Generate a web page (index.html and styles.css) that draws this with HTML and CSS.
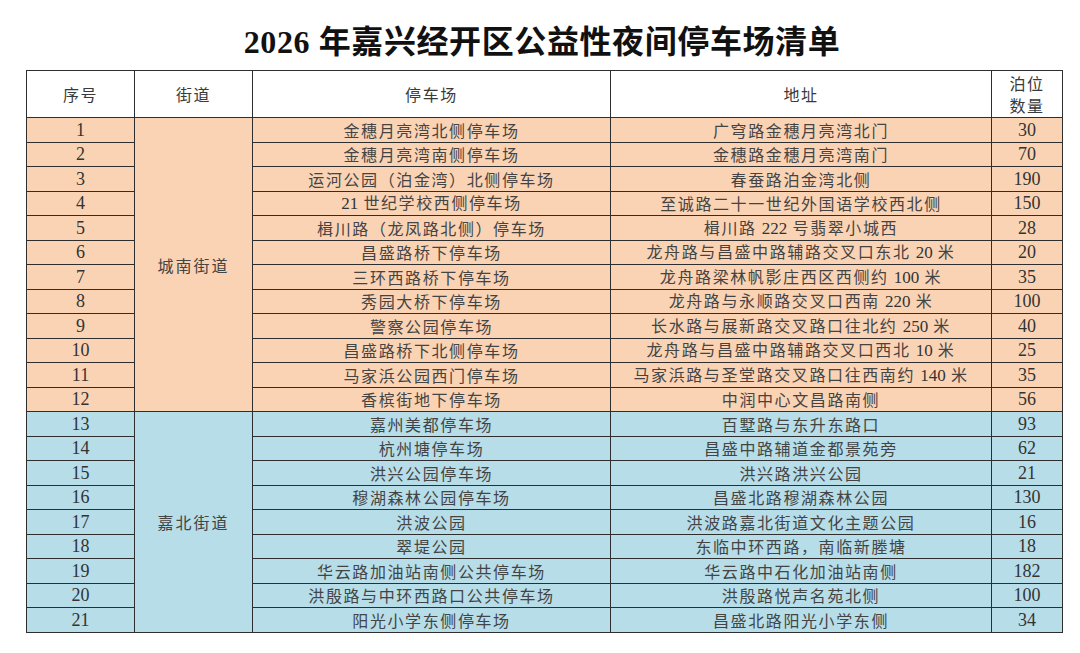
FILE: index.html
```html
<!DOCTYPE html>
<html lang="zh">
<head>
<meta charset="utf-8">
<title>2026年嘉兴经开区公益性夜间停车场清单</title>
<link rel="stylesheet" href="styles.css">
</head>
<body>
<h1 class="title">2026 年嘉兴经开区公益性夜间停车场清单</h1>
<table class="list">
  <colgroup>
    <col class="c-no"><col class="c-street"><col class="c-lot"><col class="c-addr"><col class="c-num">
  </colgroup>
  <thead>
    <tr><th>序号</th><th>街道</th><th>停车场</th><th>地址</th><th>泊位<br>数量</th></tr>
  </thead>
  <tbody class="south">
    <tr><td class="n">1</td><td class="street" rowspan="12">城南街道</td><td>金穗月亮湾北侧停车场</td><td>广穹路金穗月亮湾北门</td><td class="n">30</td></tr>
    <tr><td class="n">2</td><td>金穗月亮湾南侧停车场</td><td>金穗路金穗月亮湾南门</td><td class="n">70</td></tr>
    <tr><td class="n">3</td><td>运河公园（泊金湾）北侧停车场</td><td>春蚕路泊金湾北侧</td><td class="n">190</td></tr>
    <tr><td class="n">4</td><td><span class="num">21</span> 世纪学校西侧停车场</td><td>至诚路二十一世纪外国语学校西北侧</td><td class="n">150</td></tr>
    <tr><td class="n">5</td><td>楫川路（龙凤路北侧）停车场</td><td>楫川路 <span class="num">222</span> 号翡翠小城西</td><td class="n">28</td></tr>
    <tr><td class="n">6</td><td>昌盛路桥下停车场</td><td>龙舟路与昌盛中路辅路交叉口东北 <span class="num">20</span> 米</td><td class="n">20</td></tr>
    <tr><td class="n">7</td><td>三环西路桥下停车场</td><td>龙舟路梁林帆影庄西区西侧约 <span class="num">100</span> 米</td><td class="n">35</td></tr>
    <tr><td class="n">8</td><td>秀园大桥下停车场</td><td>龙舟路与永顺路交叉口西南 <span class="num">220</span> 米</td><td class="n">100</td></tr>
    <tr><td class="n">9</td><td>警察公园停车场</td><td>长水路与展新路交叉路口往北约 <span class="num">250</span> 米</td><td class="n">40</td></tr>
    <tr><td class="n">10</td><td>昌盛路桥下北侧停车场</td><td>龙舟路与昌盛中路辅路交叉口西北 <span class="num">10</span> 米</td><td class="n">25</td></tr>
    <tr><td class="n">11</td><td>马家浜公园西门停车场</td><td>马家浜路与圣堂路交叉路口往西南约 <span class="num">140</span> 米</td><td class="n">35</td></tr>
    <tr><td class="n">12</td><td>香槟街地下停车场</td><td>中润中心文昌路南侧</td><td class="n">56</td></tr>
  </tbody>
  <tbody class="north">
    <tr><td class="n">13</td><td class="street" rowspan="9">嘉北街道</td><td>嘉州美都停车场</td><td>百墅路与东升东路口</td><td class="n">93</td></tr>
    <tr><td class="n">14</td><td>杭州塘停车场</td><td>昌盛中路辅道金都景苑旁</td><td class="n">62</td></tr>
    <tr><td class="n">15</td><td>洪兴公园停车场</td><td>洪兴路洪兴公园</td><td class="n">21</td></tr>
    <tr><td class="n">16</td><td>穆湖森林公园停车场</td><td>昌盛北路穆湖森林公园</td><td class="n">130</td></tr>
    <tr><td class="n">17</td><td>洪波公园</td><td>洪波路嘉北街道文化主题公园</td><td class="n">16</td></tr>
    <tr><td class="n">18</td><td>翠堤公园</td><td>东临中环西路，南临新塍塘</td><td class="n">18</td></tr>
    <tr><td class="n">19</td><td>华云路加油站南侧公共停车场</td><td>华云路中石化加油站南侧</td><td class="n">182</td></tr>
    <tr><td class="n">20</td><td>洪殷路与中环西路口公共停车场</td><td>洪殷路悦声名苑北侧</td><td class="n">100</td></tr>
    <tr><td class="n">21</td><td>阳光小学东侧停车场</td><td>昌盛北路阳光小学东侧</td><td class="n">34</td></tr>
  </tbody>
</table>
</body>
</html>
```
FILE: styles.css
```css
html, body {
  margin: 0;
  padding: 0;
  background: #ffffff;
}
body {
  width: 1080px;
  height: 653px;
  overflow: hidden;
  font-family: "Noto Sans CJK SC", sans-serif;
  color: #444444;
}
.title {
  margin: 0;
  height: 70px;
  line-height: 84px;
  text-align: center;
  font-family: "Liberation Serif", "Noto Sans CJK SC", serif;
  font-weight: 700;
  font-size: 32px;
  color: #111;
  letter-spacing: 0.6px;
  padding-left: 4px;
}
.list {
  margin-left: 26px;
  width: 1036px;
  table-layout: fixed;
  border-collapse: collapse;
  border: 1.5px solid #333;
}
.c-no { width: 108px; }
.c-street { width: 118px; }
.c-lot { width: 358px; }
.c-addr { width: 381px; }
.c-num { width: 71px; }
.list th, .list td {
  border: 1px solid #2e2e2e;
  padding: 0;
  text-align: center;
  vertical-align: middle;
  font-weight: 400;
  font-size: 16px;
  letter-spacing: 1.6px;
  white-space: nowrap;
  overflow: hidden;
}
.list th {
  height: 46px;
  line-height: 22px;
  background: #ffffff;
  color: #3a3a3a;
}
.list td {
  height: 23.5px;
  line-height: 20px;
}
.list td.n, .num {
  font-family: "Liberation Serif", serif;
  font-size: 18px;
  letter-spacing: 0;
  color: #333;
}
.num {
  font-size: 17px;
}
.south td { background: #fad3b4; }
.north td { background: #b7dde8; }
.list td.street {
  letter-spacing: 2px;
}
```
